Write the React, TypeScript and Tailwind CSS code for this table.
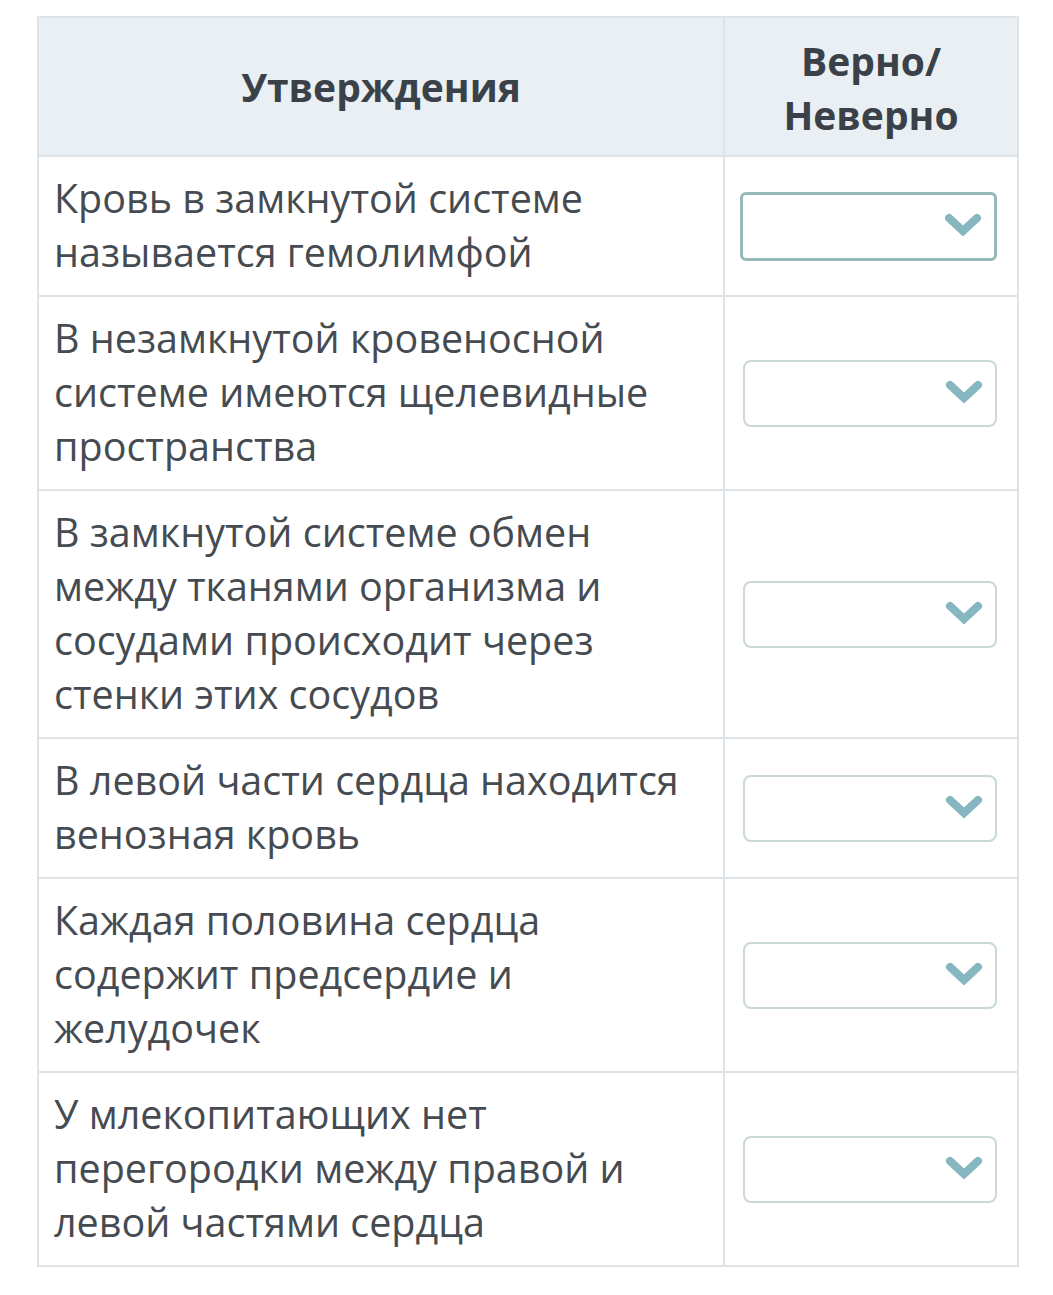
import React from 'react'

const rows = [
  'Кровь в замкнутой системе называется гемолимфой',
  'В незамкнутой кровеносной системе имеются щелевидные пространства',
  'В замкнутой системе обмен между тканями организма и сосудами происходит через стенки этих сосудов',
  'В левой части сердца находится венозная кровь',
  'Каждая половина сердца содержит предсердие и желудочек',
  'У млекопитающих нет перегородки между правой и левой частями сердца',
]

function Chevron() {
  return (
    <svg width="38" height="26" viewBox="0 0 38 26" fill="none">
      <polyline
        points="5,5 19,18 33,5"
        stroke="#86b6bf"
        strokeWidth="8"
        strokeLinecap="round"
        strokeLinejoin="miter"
      />
    </svg>
  )
}

function Select({ active }: { active?: boolean }) {
  return (
    <div
      className={
        active
          ? 'flex h-[69px] w-[257px] items-center justify-end rounded-[6px] border-[3px] border-[#95b9bb] bg-white pr-[12px]'
          : 'flex h-[67px] w-[254px] items-center justify-end rounded-[8px] border-2 border-[#cbd8d9] bg-white pr-[12px]'
      }
    >
      <Chevron />
    </div>
  )
}

export default function App() {
  return (
    <div
      className="min-h-[1295px] bg-white pl-[37px] pt-[16px]"
      style={{ fontFamily: '"Open Sans", "Noto Sans", sans-serif' }}
    >
      <table className="w-[980px] table-fixed border-collapse border-2 border-[#dde3e6]">
        <colgroup>
          <col className="w-[686px]" />
          <col className="w-[294px]" />
        </colgroup>
        <thead>
          <tr className="h-[139px] bg-[#e9eff2]">
            <th className="border-2 border-[#dde3e6] text-center text-[39px] font-bold leading-[54px] text-[#3b4148]">
              Утверждения
            </th>
            <th className="border-2 border-[#dde3e6] pt-[2px] text-center text-[39px] font-bold leading-[54px] text-[#3b4148]">
              Верно/
              <br />
              Неверно
            </th>
          </tr>
        </thead>
        <tbody>
          {rows.map((text, i) => (
            <tr key={i}>
              <td className="border-2 border-[#dde3e6] pb-[16px] pl-[15px] pr-[28px] pt-[14px] align-middle text-[39.5px] leading-[54px] text-[#464b51]">
                {text}
              </td>
              <td className="border-2 border-[#dde3e6] align-middle">
                <div className={i === 0 ? 'flex justify-center pr-[5px]' : 'flex justify-center pr-[3px]'}>
                  <Select active={i === 0} />
                </div>
              </td>
            </tr>
          ))}
        </tbody>
      </table>
    </div>
  )
}
